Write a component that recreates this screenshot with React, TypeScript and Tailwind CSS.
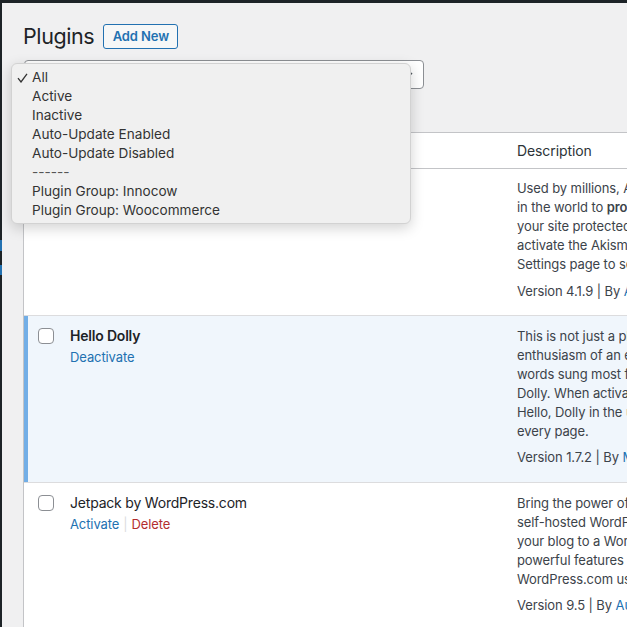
import React from "react";

const font = { fontFamily: 'Inter, "Noto Sans", "Liberation Sans", sans-serif' };

function Checkbox() {
  return <div className="w-[16px] h-[16px] rounded-[4px] border border-[#8c8f94] bg-white" />;
}

function Row({
  active,
  title,
  actions,
  desc,
  version,
  author,
}: {
  active?: boolean;
  title: string;
  actions: React.ReactNode;
  desc: React.ReactNode[];
  version: string;
  author: string;
}) {
  return (
    <div
      className={`flex border-b border-[#dcdcde] ${active ? "bg-[#f0f6fc] shadow-[inset_4px_0_0_#72aee6]" : "bg-white"}`}
    >
      <div className="w-[46px] shrink-0 pl-[14px] pt-[12px]">
        <Checkbox />
      </div>
      <div className="w-[437px] shrink-0 pt-[10px]">
        <div className={`text-[14px] leading-[19px] tracking-[-0.2px] text-[#1d2327] ${active ? "font-semibold" : ""}`}>{title}</div>
        <div className="text-[13px] leading-[19px] mt-[3px]">{actions}</div>
      </div>
      <div className="pl-[10px] pt-[11px] pb-[15px] text-[13px] leading-[19px] text-[#3c434a] whitespace-nowrap">
        {desc.map((l, i) => (
          <div key={i}>{l}</div>
        ))}
        <div className="mt-[7px]">
          Version {version} | By <span className="text-[#2271b1]">{author}</span> | <span className="text-[#2271b1]">View details</span>
        </div>
      </div>
    </div>
  );
}

export default function App() {
  const items = [
    "All",
    "Active",
    "Inactive",
    "Auto-Update Enabled",
    "Auto-Update Disabled",
    "------",
    "Plugin Group: Innocow",
    "Plugin Group: Woocommerce",
  ];
  return (
    <div className="relative w-[627px] h-[627px] overflow-hidden bg-[#f0f0f1] tracking-[-0.1px]" style={font}>
      <div className="h-[3px] bg-[#1d2327]" />
      <div className="flex h-[624px]">
        <div className="w-[2px] shrink-0 bg-[#1d2327] flex flex-col">
          <div className="h-[237px]" />
          <div className="h-[11px] bg-[#2271b1]" />
          <div className="h-[14px]" />
          <div className="h-[10px] bg-[#2271b1]" />
        </div>
        <div className="flex-1 pl-[21px] min-w-0">
          <div className="flex items-center mt-[21px] h-[25px]">
            <h1 className="text-[21.5px] leading-[29px] tracking-[-0.4px] text-[#1d2327] font-normal">Plugins</h1>
            <div className="ml-[9px] h-[25px] w-[75px] flex items-center justify-center rounded-[3px] border border-[#2271b1] text-[#2271b1] text-[13px] font-semibold bg-[#f6f7f7]">
              Add New
            </div>
          </div>
          <div className="mt-[11px] ml-[1px] w-[400px] h-[29px] rounded-[4px] border border-[#8c8f94] bg-white flex items-center justify-end pr-[10px]">
            <svg width="10" height="10" viewBox="0 0 10 10">
              <path d="M1 3 L5 7 L9 3" fill="none" stroke="#50575e" strokeWidth="1.5" />
            </svg>
          </div>
          <div className="mt-[43px] w-[900px] border-l border-t border-[#c3c4c7] bg-white">
            <div className="flex border-b border-[#c3c4c7] h-[36px]">
              <div className="w-[483px] shrink-0" />
              <div className="pl-[10px] pt-[8px] text-[14px] leading-[19px] text-[#2c3338]">Description</div>
            </div>
            <div className="flex border-b border-[#dcdcde] bg-white h-[147px]">
              <div className="w-[483px] shrink-0" />
              <div className="pl-[10px] pt-[10px] text-[13px] leading-[19px] text-[#3c434a] whitespace-nowrap">
                <div>Used by millions, Akismet is quite possibly the best way</div>
                <div>
                  in the world to <strong className="font-semibold">protect your blog from spam</strong>. It keeps
                </div>
                <div>your site protected even while you sleep. To get started:</div>
                <div>activate the Akismet plugin and then go to your Akismet</div>
                <div>Settings page to set up your API key.</div>
                <div className="mt-[8px]">
                  Version 4.1.9 | By <span className="text-[#2271b1]">Automattic</span> | <span className="text-[#2271b1]">View details</span>
                </div>
              </div>
            </div>
            <Row
              active
              title="Hello Dolly"
              actions={<span className="text-[#2271b1]">Deactivate</span>}
              desc={[
                "This is not just a plugin, it symbolizes the hope and",
                "enthusiasm of an entire generation summed up in two",
                "words sung most famously by Louis Armstrong: Hello,",
                "Dolly. When activated you will randomly see a lyric from",
                "Hello, Dolly in the upper right of your admin screen on",
                "every page.",
              ]}
              version="1.7.2"
              author="Matt Mullenweg"
            />
            <Row
              title="Jetpack by WordPress.com"
              actions={
                <span>
                  <span className="text-[#2271b1]">Activate</span>
                  <span className="text-[#dcdcde] mx-[4px]">|</span>
                  <span className="text-[#b32d2e]">Delete</span>
                </span>
              }
              desc={[
                "Bring the power of the WordPress.com cloud to your",
                "self-hosted WordPress. Jetpack enables you to connect",
                "your blog to a WordPress.com account to use the",
                "powerful features normally only available to",
                "WordPress.com users.",
              ]}
              version="9.5"
              author="Automattic"
            />
          </div>
        </div>
      </div>

      <div className="absolute left-[11px] top-[63px] w-[400px] h-[161px] rounded-[6px] border border-[#d2d2d2] bg-[#f0f0f0] shadow-[0_4px_14px_rgba(0,0,0,0.18)] pt-[4px] tracking-normal">
        {items.map((it, i) => (
          <div key={i} className="relative h-[19px] leading-[19px] text-[13.6px] pl-[20px] text-[#333333]">
            {i === 0 && (
              <svg className="absolute left-[5px] top-[5px]" width="11" height="10" viewBox="0 0 11 10">
                <path d="M1 5.2 L4 9 L10 0.8" fill="none" stroke="#333333" strokeWidth="1.3" />
              </svg>
            )}
            <span className={it === "------" ? "text-[#555555]" : ""}>{it}</span>
          </div>
        ))}
      </div>
    </div>
  );
}
